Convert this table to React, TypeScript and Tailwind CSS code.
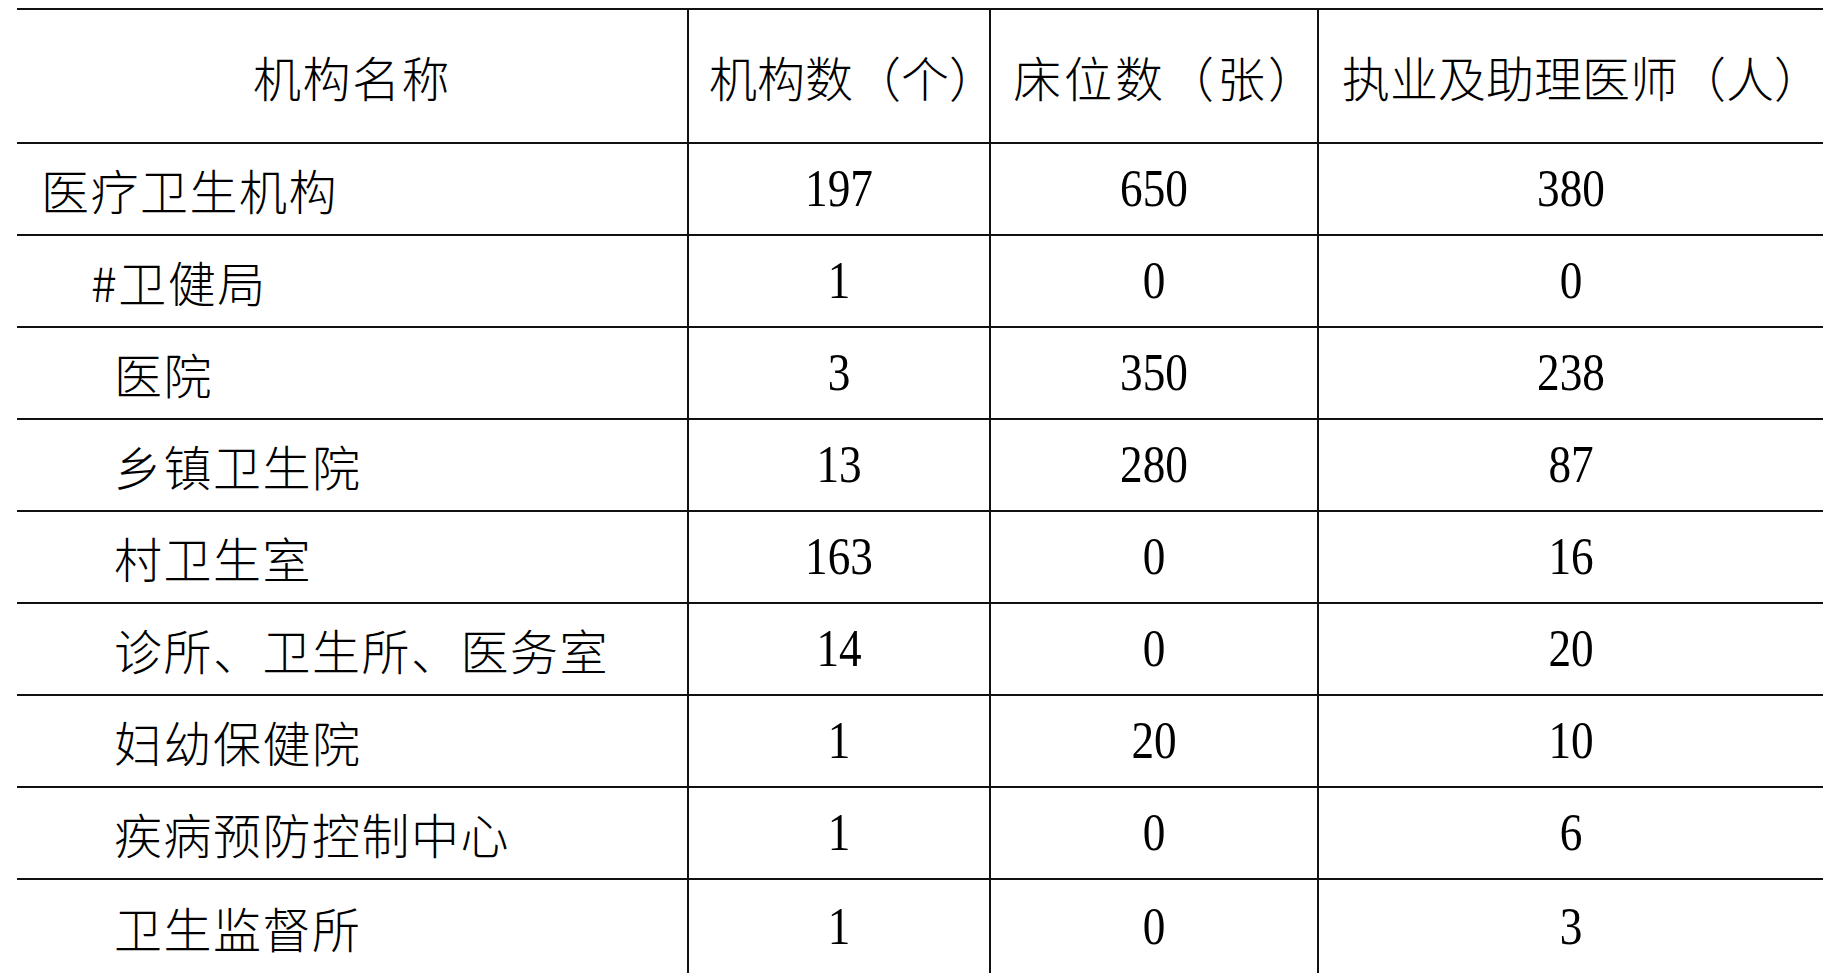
import React from "react";

// 医疗卫生机构统计表
const rows = [
    { name: "医疗卫生机构", indent: "pl-[24px]", count: "197", beds: "650", doctors: "380" },
    { name: "#卫健局", indent: "pl-[74px]", count: "1", beds: "0", doctors: "0" },
    { name: "医院", indent: "pl-[97px]", count: "3", beds: "350", doctors: "238" },
    { name: "乡镇卫生院", indent: "pl-[97px]", count: "13", beds: "280", doctors: "87" },
    { name: "村卫生室", indent: "pl-[97px]", count: "163", beds: "0", doctors: "16" },
    { name: "诊所、卫生所、医务室", indent: "pl-[97px]", count: "14", beds: "0", doctors: "20" },
    { name: "妇幼保健院", indent: "pl-[97px]", count: "1", beds: "20", doctors: "10" },
    { name: "疾病预防控制中心", indent: "pl-[97px]", count: "1", beds: "0", doctors: "6" },
    { name: "卫生监督所", indent: "pl-[97px]", count: "1", beds: "0", doctors: "3" },
];

const cjk = "font-['Noto_Sans_CJK_SC','Noto_Sans',sans-serif]";

function Num({ value }: { value: string }) {
    return (
        <span className="inline-block scale-x-[0.87] font-['Liberation_Serif','Times_New_Roman',serif] text-[52px] leading-none text-black">
            {value}
        </span>
    );
}

export default function App() {
    return (
        <div className="w-[1823px] h-[973px] overflow-hidden bg-white">
            <div className={`ml-[17px] mt-[8px] grid grid-cols-[670px_302px_328px_506px] text-black ${cjk}`}>
                {/* header */}
                <div className="h-[134px] border-t-2 border-[#111] flex items-center justify-center text-[48px] font-light tracking-[1.5px]">
                    机构名称
                </div>
                <div className="h-[134px] border-t-2 border-l-2 border-[#111] flex items-center justify-center pl-[20px] text-[48px] font-light">
                    机构数（个）
                </div>
                <div className="h-[134px] border-t-2 border-l-2 border-[#111] flex items-center justify-center pl-[22px] text-[48px] font-light tracking-[3px]">
                    床位数（张）
                </div>
                <div className="h-[134px] border-t-2 border-l-2 border-[#111] flex items-center justify-center pl-[22px] text-[48px] font-light">
                    执业及助理医师（人）
                </div>

                {rows.map((r, i) => {
                    const h = i === rows.length - 1 ? "h-[95px]" : "h-[92px]";
                    return (
                        <React.Fragment key={r.name}>
                            <div className={`${h} border-t-2 border-[#111] flex items-center text-[48px] font-light tracking-[1.5px] whitespace-nowrap ${r.indent}`}>
                                {r.name}
                            </div>
                            <div className={`${h} border-t-2 border-l-2 border-[#111] flex items-center justify-center`}>
                                <Num value={r.count} />
                            </div>
                            <div className={`${h} border-t-2 border-l-2 border-[#111] flex items-center justify-center`}>
                                <Num value={r.beds} />
                            </div>
                            <div className={`${h} border-t-2 border-l-2 border-[#111] flex items-center justify-center`}>
                                <Num value={r.doctors} />
                            </div>
                        </React.Fragment>
                    );
                })}
            </div>
        </div>
    );
}
